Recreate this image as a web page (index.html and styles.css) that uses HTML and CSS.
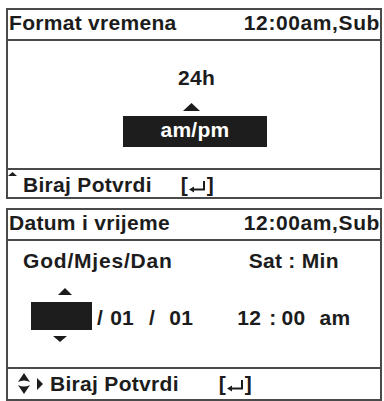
FILE: index.html
```html
<!DOCTYPE html>
<html>
<head>
<meta charset="utf-8">
<link rel="stylesheet" href="styles.css">
</head>
<body>
<div class="screen">
  <section class="panel p1">
    <header class="hdr"><span>Format vremena</span><span class="clock">12:00am,Sub</span></header>
    <div class="body1">
      <div class="val">24h</div>
      <svg class="tri-up" width="17" height="8" viewBox="0 0 17 8"><polygon points="0,8 8.5,0 17,8"/></svg>
      <div class="sel">am/pm</div>
    </div>
    <footer class="ftr f1">
      <svg class="mini" width="9" height="4" viewBox="0 0 9 4"><polygon points="0,4 4.5,0 9,4"/></svg>
      <span class="lbl">Biraj Potvrdi</span>
      <span class="enter e1">[<svg width="19" height="18" viewBox="0 0 19 18"><path d="M4 12.5H16V4" fill="none" stroke="#1c1c1c" stroke-width="2"/><polygon points="1,12.5 6,9.5 6,15.5"/></svg>]</span>
    </footer>
  </section>
  <section class="panel p2">
    <header class="hdr"><span>Datum i vrijeme</span><span class="clock">12:00am,Sub</span></header>
    <div class="body2">
      <div class="row1"><span class="lab-date">God/Mjes/Dan</span><span class="lab-time">Sat : Min</span></div>
      <div class="row2">
        <div class="spin">
          <svg class="sp-up" width="14" height="7" viewBox="0 0 14 7"><polygon points="0,7 7,0 14,7"/></svg>
          <div class="sp-box"></div>
          <svg class="sp-dn" width="14" height="6" viewBox="0 0 14 6"><polygon points="0,0 14,0 7,6"/></svg>
        </div>
        <div class="date"><span>/</span><span class="d1">01</span><span class="d2">/</span><span class="d3">01</span></div>
        <div class="time"><span>12</span><span class="t1">:</span><span class="t2">00</span><span class="t3">am</span></div>
      </div>
    </div>
    <footer class="ftr f2">
      <svg class="updown" width="26" height="24" viewBox="0 0 26 24"><path d="M0 11 L6 2 L12 11 Q6 8 0 11Z"/><path d="M0 14 Q6 17 12 14 L6 23Z"/><polygon points="19,7 25,13 19,19"/></svg>
      <span class="lbl">Biraj Potvrdi</span>
      <span class="enter e2">[<svg width="19" height="18" viewBox="0 0 19 18"><path d="M4 12.5H16V4" fill="none" stroke="#1c1c1c" stroke-width="2"/><polygon points="1,12.5 6,9.5 6,15.5"/></svg>]</span>
    </footer>
  </section>
</div>
</body>
</html>
```
FILE: styles.css
```css
html, body {
  margin: 0;
  background: #ffffff;
}
body {
  font-family: "Liberation Sans", Arial, sans-serif;
  font-weight: bold;
  font-size: 21px;
  letter-spacing: 0.3px;
  color: #1c1c1c;
  overflow: hidden;
  height: 401px;
}
svg { fill: #1c1c1c; display: block; }
.screen {
  padding: 8px 0 0 6px;
  display: flex;
  flex-direction: column;
  gap: 9px;
}
.panel {
  width: 376px;
  box-sizing: border-box;
  border: 2px solid #4a4a4a;
  overflow: hidden;
}
.p1 { height: 191px; }
.p2 { height: 193px; }
.hdr {
  display: flex;
  justify-content: space-between;
  height: 26px;
  line-height: 26px;
  padding: 0 0 3px 1px;
  border-bottom: 2px solid #4a4a4a;
  white-space: nowrap;
}
.clock { letter-spacing: 0.6px; }
.body1 {
  height: 127px;
  box-sizing: border-box;
  padding-top: 27px;
  display: flex;
  flex-direction: column;
  align-items: center;
}
.val {
  line-height: 20px;
  margin-left: 5px;
}
.tri-up {
  margin-top: 15px;
  margin-right: 5px;
}
.sel {
  margin-top: 5px;
  width: 144px;
  height: 28px;
  padding-bottom: 3px;
  line-height: 28px;
  background: #1d1d1d;
  color: #ffffff;
  text-align: center;
  margin-left: 2px;
}
.ftr {
  border-top: 2px solid #4a4a4a;
  display: flex;
  align-items: flex-start;
  white-space: nowrap;
}
.f1 {
  height: 25px;
  padding-top: 2px;
  line-height: 25px;
}
.f1 .mini { margin: 0 6px 0 0; }
.f2 {
  height: 30px;
  line-height: 30px;
}
.f2 .updown { margin: 2px 6px 0 10px; }
.enter {
  display: inline-flex;
  align-items: center;
  letter-spacing: 0;
}
.enter svg { margin-top: 2px; }
.e1 { margin-left: 29px; }
.e2 { margin-left: 40px; }
.body2 {
  height: 126px;
  box-sizing: border-box;
  padding: 10px 0 0 15px;
}
.row1 {
  display: flex;
  line-height: 20px;
  white-space: nowrap;
}
.lab-date { letter-spacing: 0.8px; }
.lab-time { margin-left: 76px; }
.row2 {
  display: flex;
  align-items: flex-start;
  margin-top: 17px;
  white-space: nowrap;
}
.spin {
  display: flex;
  flex-direction: column;
  margin-left: 8px;
}
.sp-up { margin-left: 27px; }
.sp-box {
  margin-top: 7px;
  width: 61px;
  height: 28px;
  background: #1d1d1d;
}
.sp-dn { margin-top: 6px; margin-left: 22px; }
.date, .time {
  display: flex;
  margin-top: 20px;
  line-height: 20px;
  letter-spacing: 0.3px;
}
.date { margin-left: 5px; }
.d1 { margin-left: 7px; }
.d2 { margin-left: 15px; }
.d3 { margin-left: 14px; }
.time { margin-left: 44px; }
.t1 { margin-left: 8px; }
.t2 { margin-left: 5px; }
.t3 { margin-left: 14px; }
```
